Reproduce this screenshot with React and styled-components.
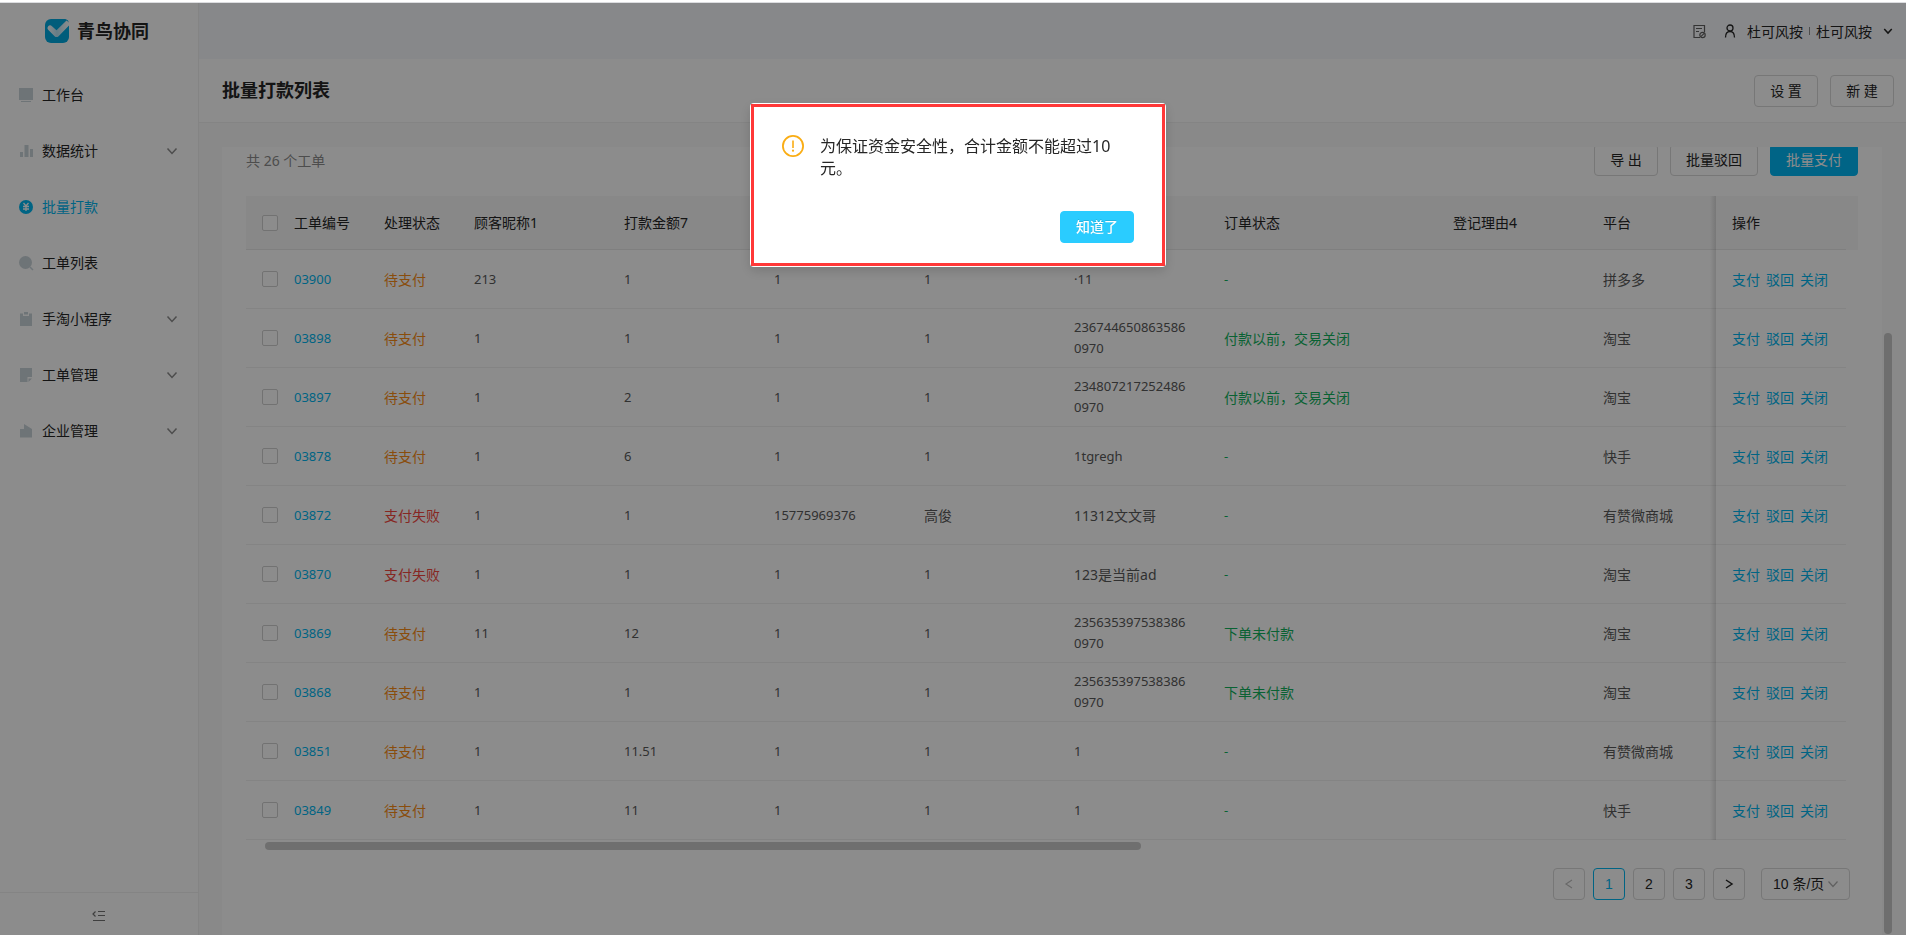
import React, { useState } from "react";
import styled, { createGlobalStyle } from "styled-components";

const GlobalStyle = createGlobalStyle`
  * {
    box-sizing: border-box;
  }

  body {
    margin: 0;
    font-family: "Noto Sans", "Noto Sans CJK SC", sans-serif;
    font-size: 14px;
    line-height: 21px;
    color: #262626;
    background: #fff;
  }

  button,
  input,
  select {
    font: inherit;
    margin: 0;
  }
`;

const Page = styled.div`
  display: flex;
  flex-direction: column;
  height: 100vh;
  overflow: hidden;
`;

const TopLine = styled.div`
  flex: none;
  height: 3px;
  background: #fff;
  border-bottom: 1px solid #dcdde0;
`;

const Layout = styled.div`
  flex: 1;
  display: flex;
  min-height: 0;
`;

const Sidebar = styled.aside`
  flex: none;
  display: flex;
  flex-direction: column;
  width: 199px;
  border-right: 1px solid #f0f0f0;
`;

const Logo = styled.div`
  display: flex;
  align-items: center;
  justify-content: center;
  gap: 8px;
  height: 56px;
  padding-right: 4px;
  font-size: 18px;
  font-weight: 700;
`;

const Menu = styled.nav`
  flex: 1;
  padding-top: 8px;
`;

const MenuItem = styled.a`
  display: flex;
  align-items: center;
  gap: 8px;
  height: 56px;
  padding: 0 20px 0 18px;
  color: ${(props) => (props.$active ? "#00b7f0" : "#262626")};
  line-height: 20px;
  text-decoration: none;
`;

const MenuLabel = styled.span`
  flex: 1;
`;

const CollapseButton = styled.button`
  display: flex;
  align-items: center;
  justify-content: center;
  height: 43px;
  padding: 4px 0 0;
  border: 0;
  border-top: 1px solid #f0f0f0;
  background: none;
`;

const Main = styled.main`
  flex: 1;
  display: flex;
  flex-direction: column;
  min-width: 0;
`;

const Header = styled.header`
  flex: none;
  display: flex;
  align-items: center;
  justify-content: flex-end;
  height: 56px;
  padding-right: 13px;
  background: #f6f8fb;
`;

const UserMenu = styled.button`
  display: flex;
  align-items: center;
  padding: 0;
  margin-left: 16px;
  border: 0;
  background: none;
  color: #262626;

  & > svg:first-child {
    margin-right: 10px;
  }

  & > svg:last-child {
    margin-left: 11px;
  }
`;

const Divider = styled.span`
  width: 1px;
  height: 8px;
  margin: 0 6px;
  background: #8c8c8c;
`;

const TitleBar = styled.div`
  flex: none;
  display: flex;
  align-items: center;
  justify-content: space-between;
  height: 64px;
  padding: 0 12px 0 23px;
  border-bottom: 1px solid #f0f0f0;
`;

const Title = styled.h1`
  margin: 0;
  font-size: 18px;
  font-weight: 700;
`;

const ButtonGroup = styled.div`
  display: flex;
  gap: 12px;
`;

const Button = styled.button`
  min-width: 64px;
  height: 32px;
  padding: 0 15px;
  border: 1px solid ${(props) => (props.$primary ? "#00b7f5" : "#d9d9d9")};
  border-radius: 4px;
  background: ${(props) => (props.$primary ? "#00b7f5" : "#fff")};
  color: ${(props) => (props.$primary ? "#fff" : "#262626")};
  line-height: 20px;
`;

const Content = styled.div`
  flex: 1;
  display: flex;
  min-height: 0;
  padding: 24px 0 0 23px;
  background: #fafafa;
`;

const Card = styled.section`
  flex: 1;
  min-width: 0;
  padding: 0 24px;
  overflow: hidden;
  background: #fff;
`;

// the list is scrolled, so the toolbar slips under the top of the card
const Toolbar = styled.div`
  display: flex;
  align-items: center;
  justify-content: space-between;
  margin: -3px 0 20px;
`;

const Total = styled.span`
  color: #8c8c8c;
`;

const TableArea = styled.div`
  display: grid;
  grid-template-columns: minmax(0, 1fr) 12px;
`;

const TableCorner = styled.div`
  height: 54px;
  background: #f8f8f8;
`;

const Table = styled.table`
  width: 100%;
  table-layout: fixed;
  border-collapse: separate;
  border-spacing: 0;
`;

const Col = styled.col`
  width: ${(props) => (props.$width ? `${props.$width}px` : "auto")};
`;

const HeadCell = styled.th`
  height: 54px;
  padding: 0 0 0 16px;
  border-bottom: 1px solid #e8e8e8;
  background: #f8f8f8;
  font-weight: 400;
  text-align: left;
  white-space: nowrap;
`;

const Cell = styled.td`
  height: 59px;
  padding: 8px 16px;
  border-bottom: 1px solid #f0f0f0;
  color: ${(props) => props.$color || "#595959"};
  font-size: ${(props) => (props.$latin ? "13px" : "14px")};
  word-break: break-all;
`;

const CheckCell = styled(Cell)`
  padding-right: 0;
`;

const fixedShadow = `
  position: relative;

  &::before {
    content: "";
    position: absolute;
    top: 0;
    bottom: -1px;
    left: -6px;
    width: 6px;
    background: linear-gradient(to left, rgba(0, 0, 0, 0.12), transparent);
  }
`;

const FixedHeadCell = styled(HeadCell)`
  ${fixedShadow}
`;

const FixedCell = styled(Cell)`
  ${fixedShadow}
`;

const Checkbox = styled.input`
  display: block;
  appearance: none;
  width: 16px;
  height: 16px;
  border: 1px solid #d0d0d0;
  border-radius: 2px;
  background: #fff;

  &:checked {
    background: #00b7f0;
  }
`;

const Link = styled.a`
  color: #00b7f0;
  text-decoration: none;
`;

const Actions = styled.div`
  display: flex;
  gap: 6px;
  white-space: nowrap;
`;

const HorizontalTrack = styled.div`
  height: 12px;
  padding: 2px 0 2px 19px;
`;

const HorizontalThumb = styled.div`
  width: 55%;
  height: 8px;
  border-radius: 4px;
  background: #cbcbcb;
`;

const VerticalTrack = styled.div`
  flex: none;
  display: grid;
  grid-template-rows: 186fr 601fr;
  width: 24px;
  padding: 0 14px 1px 2px;
`;

const VerticalThumb = styled.div`
  grid-row: 2;
  border-radius: 4px;
  background: #c8c8c8;
`;

const Pagination = styled.nav`
  display: flex;
  justify-content: flex-end;
  gap: 8px;
  margin-top: 16px;
  padding-right: 8px;
  font-family: "Liberation Sans", "Noto Sans CJK SC", sans-serif;
`;

const PageButton = styled.button`
  display: flex;
  align-items: center;
  justify-content: center;
  width: 32px;
  height: 32px;
  padding: 0;
  border: 1px solid ${(props) => (props.$active ? "#00b7f0" : "#d9d9d9")};
  border-radius: 4px;
  background: #fff;
  color: ${(props) => (props.$active ? "#00b7f0" : "#262626")};

  &:disabled {
    color: #bfbfbf;
  }
`;

const PageSize = styled.label`
  position: relative;
  margin-left: 8px;

  svg {
    position: absolute;
    top: 10px;
    right: 11px;
    pointer-events: none;
  }
`;

const PageSizeSelect = styled.select`
  appearance: none;
  width: 89px;
  height: 32px;
  padding: 0 11px;
  border: 1px solid #d9d9d9;
  border-radius: 4px;
  background: #fff;
  color: #262626;
`;

const Overlay = styled.div`
  position: fixed;
  top: 3px;
  right: 0;
  bottom: 0;
  left: 0;
  display: flex;
  align-items: flex-start;
  justify-content: center;
  padding: 100px 0 0 10px;
  background: rgba(0, 0, 0, 0.45);
`;

const Dialog = styled.div`
  position: relative;
  width: 416px;
  padding: 32px 32px 24px;
  border-radius: 4px;
  background: #fff;
  box-shadow: 0 4px 12px rgba(0, 0, 0, 0.15);

  &::after {
    content: "";
    position: absolute;
    inset: 1px;
    border: 3px solid #ff3838;
    pointer-events: none;
  }
`;

const DialogBody = styled.div`
  display: flex;
  align-items: flex-start;
  gap: 16px;

  svg {
    flex: none;
  }
`;

const DialogText = styled.p`
  margin: 0;
  font-size: 16px;
  line-height: 22px;
`;

const DialogFooter = styled.div`
  display: flex;
  justify-content: flex-end;
  margin-top: 32px;
`;

const ConfirmButton = styled(Button)`
  border-color: #2accff;
  background: #2accff;
  font-weight: 500;
  text-shadow: 0 -1px 0 rgba(0, 0, 0, 0.12);
`;

const Chevron = ({ direction = "down", size = 12, color = "#8c8c8c", weight = 1.5 }) => {
  const paths = {
    down: "M1.5 3.5 6 8.5 10.5 3.5",
    left: "M9 2 3 6 9 10",
    right: "M3 2 9 6 3 10",
  };
  return (
    <svg width={size} height={size} viewBox="0 0 12 12" fill="none" stroke={color} strokeWidth={weight}>
      <path d={paths[direction]} />
    </svg>
  );
};

const LogoIcon = () => (
  <svg width="24" height="24" viewBox="0 0 24 24">
    <defs>
      <linearGradient id="logoWing" x1="0" y1="0" x2="1" y2="0">
        <stop offset="0" stopColor="#fff" />
        <stop offset="0.45" stopColor="#b8e4f5" />
        <stop offset="1" stopColor="#fff" />
      </linearGradient>
    </defs>
    <path
      fill="#00a9e0"
      d="M6 0h13c2 0 3 .6 4 1.5L24 4v14a6 6 0 0 1-6 6H6a6 6 0 0 1-6-6V6a6 6 0 0 1 6-6z"
    />
    <path
      fill="url(#logoWing)"
      d="M3.2 7.2c1-1.2 2.6-1.2 3.8 0l4.5 4L21.5 1.5 24 3.5v3L13.6 17.2c-1.2 1.2-2.8 1.2-4 0L3.4 11c-1.2-1.2-1.2-2.6-.2-3.8z"
    />
  </svg>
);

const menuIcons = {
  desk: (
    <>
      <path d="M1 1h14v12H1z" />
      <path d="M3 14h10v1H3z" />
    </>
  ),
  stats: <path d="M2 9h3v5H2zM6.500 2h4v12h-4zM12 6h3v8h-3z" />,
  pay: (
    <>
      <circle cx="8" cy="8" r="7" />
      <path d="M5.500 4 8 7l2.500-3M8 7v5M5 7.500h6M5 10h6" fill="none" stroke="#fff" strokeWidth="1.300" />
    </>
  ),
  search: (
    <>
      <circle cx="7.500" cy="7.500" r="6.500" />
      <path d="m12 12 3 3" stroke="#c9d6dc" strokeWidth="1.500" />
    </>
  ),
  clipboard: (
    <>
      <path d="M2 2.500h12V15H2z" />
      <path d="M5 1h6v4H5z" fill="#fff" />
      <path d="M6 1h4v2.500H6z" />
    </>
  ),
  note: (
    <>
      <path d="M2 1h12v9H9.500v5H2z" />
      <path d="M10.500 11.500H14L10.500 15z" />
    </>
  ),
  company: <path d="M2 6h4V1l8 5v8.500H2z" />,
};

const MenuIcon = ({ name, active }) => (
  <svg width="16" height="16" viewBox="0 0 16 16" fill={active ? "#00b7f0" : "#c9d3d9"}>
    {menuIcons[name]}
  </svg>
);

const NoticeIcon = () => (
  <svg width="15" height="15" viewBox="0 0 15 15" fill="none" stroke="#606060" strokeWidth="1.200">
    <path d="M8 13.500H2v-12h10.500V8M4 4.500h6M4 7.500h3" />
    <circle cx="10.500" cy="11" r="2.700" />
    <path d="m8.800 12.700 3.400-3.400" />
  </svg>
);

const UserIcon = () => (
  <svg width="14" height="14" viewBox="0 0 14 14" fill="none" stroke="#262626" strokeWidth="1.300">
    <circle cx="7" cy="4" r="3" />
    <path d="M2.500 13.500c0-4 1.500-6 4.500-6s4.500 2 4.500 6" />
  </svg>
);

const FoldIcon = () => (
  <svg width="14" height="12" viewBox="0 0 14 12" fill="none" stroke="#737373" strokeWidth="1.200">
    <path d="M6 1.500h7M6 5.500h7M1 10.500h12M3.500 1.500 1 4l2.500 2.500" />
  </svg>
);

const WarningIcon = () => (
  <svg width="22" height="22" viewBox="0 0 22 22">
    <circle cx="11" cy="11" r="10.100" fill="none" stroke="#faad14" strokeWidth="1.800" />
    <path d="M10.200 5.500h1.600v7.500h-1.600z" fill="#faad14" />
    <circle cx="11" cy="15.700" r="1.100" fill="#faad14" />
  </svg>
);

const menu = [
  { icon: "desk", label: "工作台" },
  { icon: "stats", label: "数据统计", hasChildren: true },
  { icon: "pay", label: "批量打款", active: true },
  { icon: "search", label: "工单列表" },
  { icon: "clipboard", label: "手淘小程序", hasChildren: true },
  { icon: "note", label: "工单管理", hasChildren: true },
  { icon: "company", label: "企业管理", hasChildren: true },
];

const columns = [
  { key: "id", title: "工单编号", width: 90 },
  { key: "status", title: "处理状态", width: 90 },
  { key: "nickname", title: "顾客昵称1", width: 150 },
  { key: "amount", title: "打款金额7", width: 150 },
  { key: "account", width: 150 },
  { key: "name", width: 150 },
  { key: "order", width: 150 },
  { key: "orderStatus", title: "订单状态" },
  { key: "reason", title: "登记理由4", width: 150 },
  { key: "platform", title: "平台", width: 129 },
];

const statusColors = {
  待支付: "#fa8c16",
  支付失败: "#f5483f",
};

const rows = [
  ["03900", "待支付", "213", "1", "1", "1", "·11", "-", "", "拼多多"],
  ["03898", "待支付", "1", "1", "1", "1", "2367446508635860970", "付款以前，交易关闭", "", "淘宝"],
  ["03897", "待支付", "1", "2", "1", "1", "2348072172524860970", "付款以前，交易关闭", "", "淘宝"],
  ["03878", "待支付", "1", "6", "1", "1", "1tgregh", "-", "", "快手"],
  ["03872", "支付失败", "1", "1", "15775969376", "高俊", "11312文文哥", "-", "", "有赞微商城"],
  ["03870", "支付失败", "1", "1", "1", "1", "123是当前ad", "-", "", "淘宝"],
  ["03869", "待支付", "11", "12", "1", "1", "2356353975383860970", "下单未付款", "", "淘宝"],
  ["03868", "待支付", "1", "1", "1", "1", "2356353975383860970", "下单未付款", "", "淘宝"],
  ["03851", "待支付", "1", "11.51", "1", "1", "1", "-", "", "有赞微商城"],
  ["03849", "待支付", "1", "11", "1", "1", "1", "-", "", "快手"],
];

const isLatin = (text) => /^[\x20-\xb7]*$/.test(text);

const cellColor = (text, key) => {
  if (key === "status") return statusColors[text];
  if (key === "orderStatus") return "#12b35e";
  return undefined;
};

const SideMenu = () => (
  <Sidebar>
    <Logo>
      <LogoIcon />
      青鸟协同
    </Logo>
    <Menu>
      {menu.map((item) => (
        <MenuItem key={item.label} href="#" $active={item.active}>
          <MenuIcon name={item.icon} active={item.active} />
          <MenuLabel>{item.label}</MenuLabel>
          {item.hasChildren && <Chevron />}
        </MenuItem>
      ))}
    </Menu>
    <CollapseButton type="button" aria-label="收起菜单">
      <FoldIcon />
    </CollapseButton>
  </Sidebar>
);

const OrderTable = () => (
  <TableArea>
    <Table>
      <colgroup>
        <Col $width={32} />
        {columns.map((column) => (
          <Col key={column.key} $width={column.width} />
        ))}
        <Col $width={130} />
      </colgroup>
      <thead>
        <tr>
          <HeadCell>
            <Checkbox type="checkbox" aria-label="全选" />
          </HeadCell>
          {columns.map((column) => (
            <HeadCell key={column.key}>{column.title}</HeadCell>
          ))}
          <FixedHeadCell>操作</FixedHeadCell>
        </tr>
      </thead>
      <tbody>
        {rows.map((row) => (
          <tr key={row[0]}>
            <CheckCell>
              <Checkbox type="checkbox" aria-label={row[0]} />
            </CheckCell>
            {columns.map(({ key }, index) => (
              <Cell key={key} $latin={isLatin(row[index])} $color={cellColor(row[index], key)}>
                {key === "id" ? <Link href="#">{row[index]}</Link> : row[index]}
              </Cell>
            ))}
            <FixedCell>
              <Actions>
                <Link href="#">支付</Link>
                <Link href="#">驳回</Link>
                <Link href="#">关闭</Link>
              </Actions>
            </FixedCell>
          </tr>
        ))}
      </tbody>
    </Table>
    <TableCorner />
  </TableArea>
);

const Pager = () => {
  const [page, setPage] = useState(1);

  return (
    <Pagination>
      <PageButton
        type="button"
        aria-label="上一页"
        disabled={page === 1}
        onClick={() => setPage(page - 1)}
      >
        <Chevron direction="left" color="#bfbfbf" weight={1.2} />
      </PageButton>
      {[1, 2, 3].map((number) => (
        <PageButton
          key={number}
          type="button"
          $active={number === page}
          onClick={() => setPage(number)}
        >
          {number}
        </PageButton>
      ))}
      <PageButton
        type="button"
        aria-label="下一页"
        disabled={page === 3}
        onClick={() => setPage(page + 1)}
      >
        <Chevron direction="right" color="#262626" />
      </PageButton>
      <PageSize>
        <PageSizeSelect aria-label="每页条数">
          <option>10 条/页</option>
        </PageSizeSelect>
        <Chevron color="#b0b0b0" weight={1.2} />
      </PageSize>
    </Pagination>
  );
};

const LimitDialog = ({ onClose }) => (
  <Overlay>
    <Dialog role="alertdialog" aria-modal="true">
      <DialogBody>
        <WarningIcon />
        <DialogText>为保证资金安全性，合计金额不能超过10元。</DialogText>
      </DialogBody>
      <DialogFooter>
        <ConfirmButton type="button" $primary onClick={onClose}>
          知道了
        </ConfirmButton>
      </DialogFooter>
    </Dialog>
  </Overlay>
);

const App = () => {
  const [dialogOpen, setDialogOpen] = useState(true);

  return (
    <Page>
      <GlobalStyle />
      <TopLine />
      <Layout>
        <SideMenu />
        <Main>
          <Header>
            <NoticeIcon />
            <UserMenu type="button">
              <UserIcon />
              杜可风按
              <Divider />
              杜可风按
              <Chevron size={10} color="#262626" weight={1.8} />
            </UserMenu>
          </Header>
          <TitleBar>
            <Title>批量打款列表</Title>
            <ButtonGroup>
              <Button type="button">设 置</Button>
              <Button type="button">新 建</Button>
            </ButtonGroup>
          </TitleBar>
          <Content>
            <Card>
              <Toolbar>
                <Total>共 26 个工单</Total>
                <ButtonGroup>
                  <Button type="button">导 出</Button>
                  <Button type="button">批量驳回</Button>
                  <Button type="button" $primary onClick={() => setDialogOpen(true)}>
                    批量支付
                  </Button>
                </ButtonGroup>
              </Toolbar>
              <OrderTable />
              <HorizontalTrack>
                <HorizontalThumb />
              </HorizontalTrack>
              <Pager />
            </Card>
            <VerticalTrack>
              <VerticalThumb />
            </VerticalTrack>
          </Content>
        </Main>
      </Layout>
      {dialogOpen && <LimitDialog onClose={() => setDialogOpen(false)} />}
    </Page>
  );
};

export default App;
